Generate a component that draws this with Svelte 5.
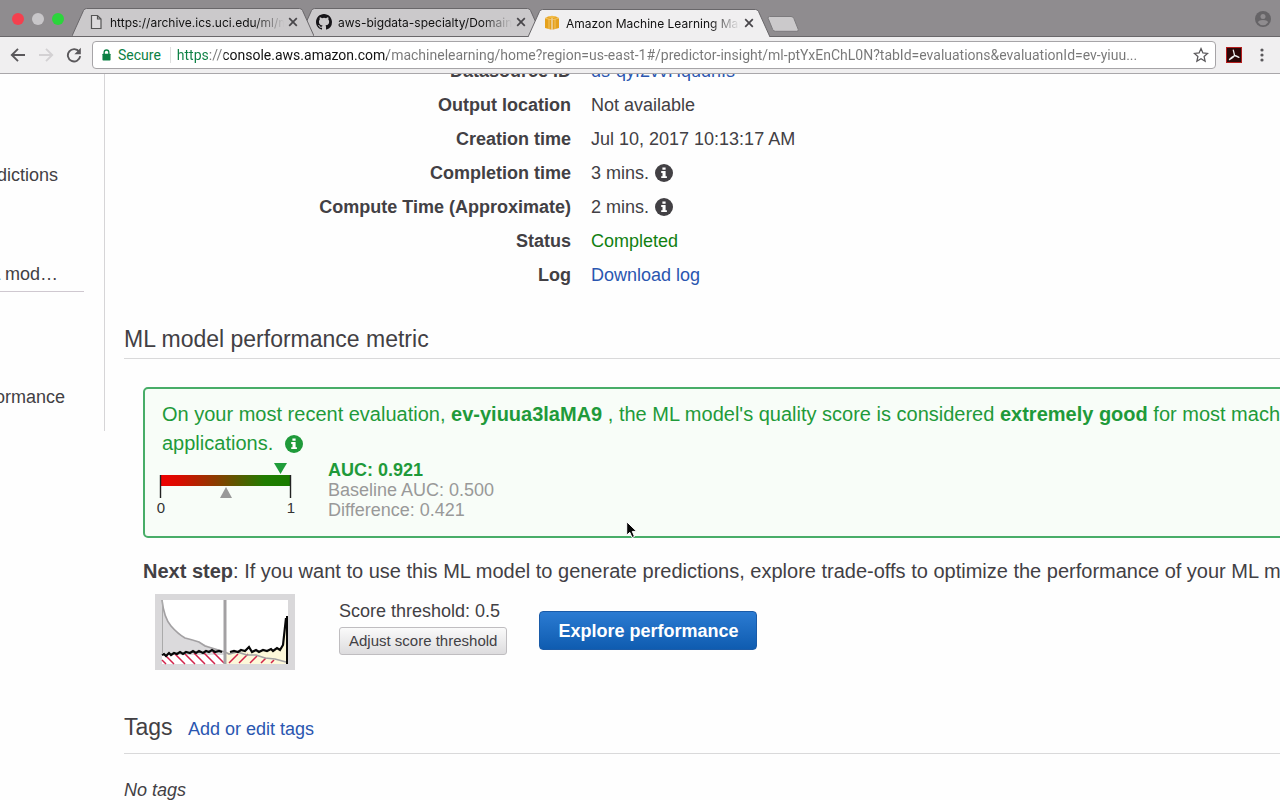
<script>
  const tabs = [
    { title: 'https://archive.ics.uci.edu/', rest: 'ml/m', icon: 'page', level: 2 },
    { title: 'aws-bigdata-specialty/Domain', rest: '', icon: 'github', level: 1 },
    { title: 'Amazon Machine Learning', rest: ' Man', icon: 'aws', active: true, level: 3 }
  ];

  const details = [
    { label: 'Datasource ID', value: 'ds-qyf2vvHqudnIs', kind: 'link' },
    { label: 'Output location', value: 'Not available' },
    { label: 'Creation time', value: 'Jul 10, 2017 10:13:17 AM' },
    { label: 'Completion time', value: '3 mins.', info: true },
    { label: 'Compute Time (Approximate)', value: '2 mins.', info: true },
    { label: 'Status', value: 'Completed', kind: 'done' },
    { label: 'Log', value: 'Download log', kind: 'link' }
  ];

  let url = $state(
    'https://console.aws.amazon.com/machinelearning/home?region=us-east-1#/predictor-insight/ml-ptYxEnChL0N?tabId=evaluations&evaluationId=ev-yiuu...'
  );
</script>

{#snippet info()}
  <svg class="info" viewBox="0 0 18 18" role="img" aria-label="Information">
    <circle cx="9" cy="9" r="9" fill="currentColor" />
    <path d="M7.4 3.4h3.2v2.4H7.4zM6.2 7h4.4v5.2h1.3v1.9H6.2v-1.9h1.3V8.9H6.2z" fill="#fff" />
  </svg>
{/snippet}

<div class="browser">
  <header>
    <div class="tabstrip">
      <div class="lights">
        <span class="red"></span><span class="grey"></span><span class="green"></span>
      </div>
      {#each tabs as tab}
        <div class="tab" class:active={tab.active} style="z-index: {tab.level}">
          <svg class="shape" viewBox="0 0 242 28" preserveAspectRatio="none" aria-hidden="true">
            <path d="M0 28L11.500 2.500Q12.500 .5 14.500 .5H227.500Q229.500 .5 230.500 2.500L242 28" />
          </svg>
          {#if tab.icon === 'page'}
            <svg class="favicon" viewBox="0 0 16 16" aria-hidden="true">
              <path d="M3.500 1.500h6l3.500 3.500v9.500h-9.500zM9.500 1.500v3.500h3.500" fill="#dddbdd" stroke="#555" stroke-width="1.200" />
            </svg>
          {:else if tab.icon === 'github'}
            <svg class="favicon" viewBox="0 0 16 16" aria-hidden="true">
              <path fill="#161418" d="M8 0C3.580 0 0 3.580 0 8c0 3.540 2.290 6.530 5.470 7.590.4.070.55-.17.55-.38v-1.490c-2.010.37-2.530-.49-2.690-.94-.09-.23-.48-.94-.82-1.130-.28-.15-.68-.52-.01-.53.63-.01 1.080.58 1.230.82.72 1.210 1.870.87 2.330.66.07-.52.28-.87.51-1.070-1.780-.2-3.640-.89-3.640-3.950 0-.87.31-1.590.82-2.150-.08-.2-.36-1.020.08-2.120 0 0 .67-.21 2.200.82a7.420 7.420 0 0 1 4 0c1.530-1.040 2.200-.82 2.200-.82.44 1.100.16 1.920.08 2.120.51.56.82 1.270.82 2.150 0 3.070-1.870 3.750-3.650 3.950.29.25.54.73.54 1.480v2.200c0 .21.15.46.55.38A8.010 8.010 0 0 0 16 8c0-4.420-3.580-8-8-8z" />
            </svg>
          {:else}
            <svg class="favicon" viewBox="0 0 16 16" aria-hidden="true">
              <path d="M1 3l4-1.500 2.500.8v12.500L1 13zM15 3l-4-1.500-2.500.8v12.500L15 13z" fill="#e5a11c" />
              <path d="M3 1.800L8 .8l5 1-5 1.700z" fill="#f2bb45" />
              <path d="M1 3.200l6.500 1.500M15 3.200L8.500 4.700M5 4v10M11 4v10" stroke="#f6d183" stroke-width=".7" />
            </svg>
          {/if}
          <span class="title">{tab.title}<span>{tab.rest}</span></span>
          <button class="close" aria-label="Close tab">
            <svg viewBox="0 0 10 10"><path d="M1.200 1.200l7.600 7.600M8.800 1.200L1.200 8.800" stroke="#48464a" stroke-width="1.700" /></svg>
          </button>
        </div>
      {/each}
      <button class="newtab" aria-label="New tab">
        <svg viewBox="0 0 34 16"><path d="M3.500.5H25q2 0 2.800 1.800l4.400 11q.6 2-1.400 2H9.500q-2 0-2.800-1.800L2.200 2.500Q1.500.5 3.500.5z" fill="#cbc9cb" stroke="#7c7a7d" /></svg>
      </button>
      <button class="profile" aria-label="Profile">
        <svg viewBox="0 0 16 16"><circle cx="8" cy="8" r="8" fill="#666467" /><circle cx="8" cy="5.500" r="2.500" fill="#8f8c8f" /><path d="M3 11.500q0-2.500 5-2.500t5 2.500q-2 2.800-5 2.800t-5-2.800z" fill="#8f8c8f" /></svg>
      </button>
    </div>

    <div class="toolbar">
      <button aria-label="Back"><svg viewBox="0 0 16 16"><path d="M15 8H2M8 1.800L1.800 8 8 14.200" fill="none" stroke="#5a585b" stroke-width="1.900" /></svg></button>
      <button aria-label="Forward"><svg viewBox="0 0 16 16"><path d="M1 8h13M8 1.800L14.200 8 8 14.200" fill="none" stroke="#d3d1d3" stroke-width="1.900" /></svg></button>
      <button aria-label="Reload"><svg viewBox="0 0 16 16"><path d="M13.200 4.800A6.200 6.200 0 1 0 14.200 9.200" fill="none" stroke="#5a585b" stroke-width="1.900" /><path d="M14.800.8v6.400H8.400z" fill="#5a585b" /></svg></button>
      <div class="omnibox">
        <svg class="lock" viewBox="0 0 10 13" aria-hidden="true"><path d="M2.400 6V3.500a2.600 2.600 0 0 1 5.200 0V6" fill="none" stroke="#0b8043" stroke-width="1.500" /><rect x=".5" y="5" width="9" height="7.500" rx=".8" fill="#0b8043" /></svg>
        <span class="secure">Secure</span>
        <input type="text" aria-label="Address" bind:value={url} spellcheck="false" />
        <button class="star" aria-label="Bookmark"><svg viewBox="0 0 16 16"><path d="M8 1.600l1.900 4.300 4.700.5-3.500 3.200 1 4.600L8 11.800l-4.100 2.400 1-4.600L1.400 6.400l4.700-.5z" fill="none" stroke="#5a585b" stroke-width="1.300" /></svg></button>
      </div>
      <button class="pdf" aria-label="PDF extension"><svg viewBox="0 0 16 16"><rect x=".5" y=".5" width="15" height="15" fill="#2b0808" stroke="#b51d1d" /><path d="M7.300 3.200q.9 3.800 1.300 5.300M8.600 8.500Q6.800 11.500 3.500 12.600M3.500 12.600q.8-2 5.100-4.100M8.600 8.500q2 .5 4.300 1.900" fill="none" stroke="#eee" stroke-width="1.300" stroke-linecap="round" /></svg></button>
      <button class="menu" aria-label="Menu"><svg viewBox="0 0 4 16"><circle cx="2" cy="3" r="1.600" /><circle cx="2" cy="8" r="1.600" /><circle cx="2" cy="13" r="1.600" /></svg></button>
    </div>
  </header>

  <div class="page">
    <nav>
      <a href="#predictions">predictions</a>
      <a href="#model" class="ruled">ML mod…</a>
      <a href="#performance" class="long">performance</a>
    </nav>

    <main>
      <dl>
        {#each details as row}
          <dt>{row.label}</dt>
          <dd>
            {#if row.kind === 'link'}<a href="#detail">{row.value}</a>
            {:else if row.kind === 'done'}<span class="done">{row.value}</span>
            {:else}{row.value}{/if}
            {#if row.info}{@render info()}{/if}
          </dd>
        {/each}
      </dl>

      <h2>ML model performance metric</h2>

      <section class="alert">
        <p>
          On your most recent evaluation, <b>ev-yiuua3laMA9</b> , the ML model's quality score is considered <b>extremely good</b> for most machine learning<br />
          applications. {@render info()}
        </p>
        <div class="score">
          <svg class="gauge" viewBox="0 0 144 56" role="img" aria-label="AUC gauge">
            <defs>
              <linearGradient id="scale"><stop offset="0" stop-color="#f00000" /><stop offset=".15" stop-color="#d90c00" /><stop offset=".8" stop-color="#207d00" /><stop offset="1" stop-color="#187c00" /></linearGradient>
            </defs>
            <rect x="7" y="15" width="131" height="11" fill="url(#scale)" />
            <path d="M7.500 15v23M137.500 15v23" stroke="#222" stroke-width="1.400" />
            <path d="M121 3h13l-6.500 11z" fill="#1f9d3a" />
            <path d="M67 38h12l-6-11z" fill="#999" />
            <text x="8" y="53">0</text>
            <text x="138" y="53">1</text>
          </svg>
          <div class="numbers">
            <b>AUC: 0.921</b>
            <span>Baseline AUC: 0.500</span>
            <span>Difference: 0.421</span>
          </div>
        </div>
      </section>

      <p class="next"><b>Next step</b>: If you want to use this ML model to generate predictions, explore trade-offs to optimize the performance of your ML model.</p>

      <div class="actions">
        <svg class="thumb" viewBox="0 0 140 76" role="img" aria-label="Score distribution">
          <rect width="140" height="76" fill="#d9d8da" />
          <rect x="7" y="6" width="126" height="64" fill="#fff" />
          <path d="M7 6Q9 24 16 32T30 44L44 48 60 55 70 58V61H7z" fill="#dbdadc" />
          <path d="M70 59L80 57 100 58 120 56 128 52 131 22V70H70z" fill="#fdf8da" />
          <path d="M10 61l9 9M20 60l10 10M30 60l10 10M39 59l11 11M49 59l11 11M58 58l11 11M7 66l4 4" stroke="#d3224a" stroke-width="1.500" />
          <path d="M74 69l9-9M84 69l9-9M95 69l7-7M106 69l5-5M116 69l3-3" stroke="#d3224a" stroke-width="1.500" />
          <path d="M7 6Q9 24 16 32T30 44Q38 46 44 48L50 52 60 55 70 58 74 60 82 58 92 61 101 61 110 64 120 65 131 68" fill="none" stroke="#a3a1a3" stroke-width="1.700" />
          <path d="M7 61L9 60 11 62 14 59 16 61 19 59 22 60 25 58 28 60 31 58 35 59 38 57 41 59 44 57 48 59 51 57 54 58 57 56 60 58 64 57 67 58M75 58L79 57 83 58 86 56 90 57 94 53 97 58 101 56 104 58 108 56 112 57 116 55 118 57 122 54 125 56 128 51 129 42 131 24" fill="none" stroke="#080808" stroke-width="2.200" />
          <path d="M131 22h2v48h-2z" fill="#080808" />
          <path d="M70 6v64" stroke="#a3a1a3" stroke-width="3" />
          <path d="M7.500 6v54" stroke="#aaa" />
        </svg>
        <div class="threshold">
          <span>Score threshold: 0.5</span>
          <button>Adjust score threshold</button>
        </div>
        <button class="primary">Explore performance</button>
      </div>

      <h2 class="tags">Tags <a href="#tags">Add or edit tags</a></h2>
      <p class="none">No tags</p>
    </main>
  </div>

  <svg class="pointer" viewBox="0 0 12 18" aria-hidden="true"><path d="M.7.8v13.400l3.100-2.900 2.200 5.200 2.500-1-2.200-5.100h4.400z" fill="#050505" stroke="#fff" stroke-width="1" /></svg>
</div>

<style>
  :global(body) { margin: 0; background: #fefefe; }
  * { box-sizing: border-box; }
  .browser {
    position: relative;
    display: flex;
    flex-direction: column;
    height: 100vh;
    overflow: hidden;
    font-family: "Liberation Sans", Arial, sans-serif;
    font-size: 18px;
    color: #424044;
  }
  svg { display: block; flex: none; }
  button { padding: 0; border: 0; background: none; font: inherit; color: inherit; }
  a { color: #2a56b0; text-decoration: none; }
  p, h2, dl, dd { margin: 0; }

  header { flex: none; font-family: Inter, sans-serif; }
  .tabstrip {
    display: flex;
    align-items: flex-end;
    height: 37px;
    padding-right: 9px;
    background: #8f8c8f;
    border-bottom: 1px solid #69676a;
  }
  .lights { display: flex; gap: 8px; width: 86px; height: 36px; padding: 13px 0 0 12px; }
  .lights span { width: 12px; height: 12px; border-radius: 50%; }
  .red { background: #f4404e; }
  .grey { background: #c8c6c9; }
  .green { background: #2bd53b; }
  .tab {
    position: relative;
    display: flex;
    align-items: center;
    flex: 0 1 242px;
    min-width: 0;
    height: 28px;
    margin-left: -14px;
    padding: 0 16px;
    font-size: 12px;
    color: #111;
  }
  .tab.active { margin-bottom: -1px; }
  .shape { position: absolute; inset: 0; width: 100%; height: 100%; fill: #cbc9cb; stroke: #69676a; }
  .active .shape { fill: #f0eff0; }
  .favicon { position: relative; width: 16px; height: 16px; }
  .title {
    position: relative;
    flex: 1;
    min-width: 0;
    margin: 0 4px 0 6px;
    overflow: hidden;
    white-space: nowrap;
    mask-image: linear-gradient(to right, #000 calc(100% - 30px), transparent);
  }
  .close { position: relative; width: 10px; height: 10px; }
  .newtab { width: 34px; height: 16px; margin: 0 auto 4px -4px; }
  .profile { width: 16px; height: 16px; margin-bottom: 9px; }

  .toolbar {
    display: flex;
    align-items: center;
    gap: 12px;
    height: 37px;
    padding: 0 16px 0 10px;
    background: #f0eff0;
    border-bottom: 1px solid #a9a7aa;
  }
  .toolbar > button { width: 16px; height: 16px; }
  .omnibox {
    display: flex;
    align-items: center;
    flex: 1;
    height: 28px;
    min-width: 0;
    margin-left: -2px;
    padding: 0 6px 0 9px;
    border: 1px solid #a6a4a7;
    border-radius: 4px;
    background: #fff;
    font-family: Roboto, sans-serif;
    font-size: 14px;
  }
  .lock { width: 9px; height: 12px; margin-right: 7px; }
  .secure { padding-right: 9px; border-right: 1px solid #dedede; color: #0b8043; }
  input {
    flex: 1;
    min-width: 0;
    padding: 0 0 0 6px;
    border: 0;
    outline: 0;
    font: inherit;
    color: transparent;
    caret-color: #222;
    background: linear-gradient(to right, #0b8043 0 38px, #777 38px 53px, #111 53px 216px, #777 216px);
    background-clip: text;
  }
  .star { width: 16px; height: 16px; margin-left: 8px; }
  .toolbar .pdf { margin-left: -2px; }
  .toolbar .menu { width: 4px; margin-left: 6px; fill: #5a585b; }

  .page { display: flex; align-items: flex-start; flex: 1; min-height: 0; overflow: hidden; }
  nav {
    display: flex;
    flex-direction: column;
    flex: none;
    width: 105px;
    height: 357px;
    padding: 84px 20px 0 0;
    overflow: hidden;
    border-right: 1px solid #d6d5d7;
  }
  nav a {
    display: flex;
    justify-content: flex-end;
    padding-right: 26px;
    line-height: 34px;
    white-space: nowrap;
    color: #424044;
  }
  nav .ruled { margin: 65px 0 88px; border-bottom: 1px solid #cfc8d0; }
  nav .long { padding-right: 19px; }

  main { flex: 1; min-width: 0; padding-left: 19px; }
  dl {
    display: grid;
    grid-template-columns: 447px 1fr;
    column-gap: 20px;
    margin-top: -20px;
    line-height: 34px;
  }
  dt { text-align: right; font-weight: bold; }
  dd { display: flex; align-items: center; gap: 6px; }
  .done { color: #118011; }
  .info { width: 18px; height: 18px; }
  h2 {
    margin-top: 34px;
    padding-bottom: 5px;
    border-bottom: 1px solid #d9d9da;
    font-size: 23px;
    font-weight: normal;
    line-height: 27px;
  }
  .alert {
    height: 151px;
    margin: 28px -4px 0 19px;
    padding: 11px 17px;
    border: 2px solid #48ad68;
    border-radius: 5px;
    background: #f8fdf8;
    color: #1f9a3a;
    font-size: 20px;
    line-height: 29px;
    white-space: nowrap;
  }
  .alert .info { display: inline-block; margin-left: 6px; vertical-align: -3px; }
  .score { display: flex; gap: 31px; margin-top: 2px; }
  .gauge { width: 144px; height: 56px; margin-left: -9px; }
  .gauge text { font-size: 15px; text-anchor: middle; fill: #333; }
  .numbers { display: flex; flex-direction: column; font-size: 18px; line-height: 20px; color: #999; }
  .numbers b { color: #1f9a3a; }
  .next { margin: 20px 0 0 19px; font-size: 20px; line-height: 26px; white-space: nowrap; }
  .actions { display: flex; align-items: flex-start; margin: 10px 0 0 31px; }
  .thumb { width: 140px; height: 76px; margin-right: 44px; }
  .threshold { display: flex; flex-direction: column; align-items: flex-start; gap: 5px; padding-top: 6px; line-height: 22px; }
  .threshold button {
    height: 28px;
    padding: 0 9px;
    border: 1px solid #bfbdc0;
    border-radius: 3px;
    background: linear-gradient(#fafafa, #dddcde);
    font-size: 15px;
  }
  .primary {
    height: 39px;
    margin: 17px 0 0 32px;
    padding: 2px 18px 0;
    border: 1px solid #1a5ba8;
    border-radius: 4px;
    background: linear-gradient(#2b7bd2, #0f5cb0);
    color: #fff;
    font-weight: bold;
  }
  .tags { margin-top: 44px; padding-bottom: 10px; }
  .tags a { margin-left: 9px; font-size: 18px; }
  .none { margin-top: 24px; line-height: 24px; font-style: italic; }
  .pointer { position: absolute; left: 626px; top: 521px; width: 12px; height: 18px; }
</style>
